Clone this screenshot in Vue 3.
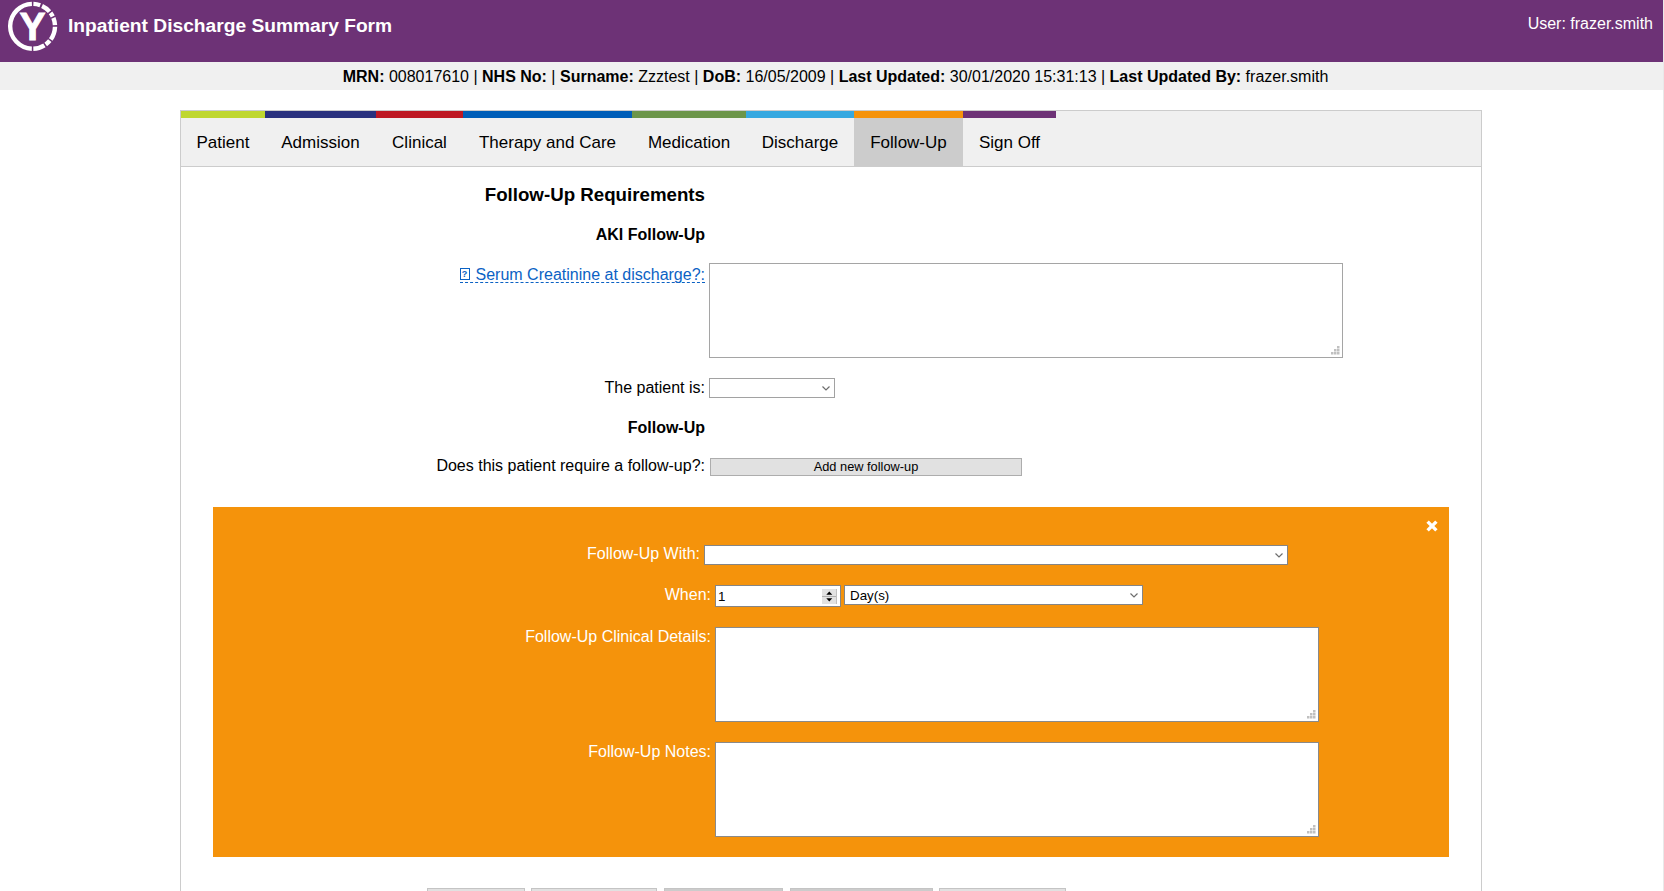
<script setup>
import { ref } from 'vue'

const tabs = [
  { name: 'Patient', key: 'patient' },
  { name: 'Admission', key: 'admission' },
  { name: 'Clinical', key: 'clinical' },
  { name: 'Therapy and Care', key: 'therapy' },
  { name: 'Medication', key: 'medication' },
  { name: 'Discharge', key: 'discharge' },
  { name: 'Follow-Up', key: 'followup' },
  { name: 'Sign Off', key: 'signoff' },
]
const active = ref('followup')

const details = [
  { label: 'MRN:', value: '008017610' },
  { label: 'NHS No:', value: '' },
  { label: 'Surname:', value: 'Zzztest' },
  { label: 'DoB:', value: '16/05/2009' },
  { label: 'Last Updated:', value: '30/01/2020 15:31:13' },
  { label: 'Last Updated By:', value: 'frazer.smith' },
]
</script>

<template>
  <div class="page">
    <header class="top">
      <svg class="logo" width="50" height="50" viewBox="0 0 50 50">
        <circle cx="24.6" cy="25.3" r="22.4" fill="none" stroke="#fff" stroke-width="4.4" pathLength="360"
          stroke-dasharray="18 5 24 4 11 4 19 4 35 4 14 4 30 4 176 4" transform="rotate(-88 24.6 25.3)" />
        <text x="24.4" y="39.4" text-anchor="middle" class="logo-letter">Y</text>
      </svg>
      <h1>Inpatient Discharge Summary Form</h1>
      <span class="user">User: frazer.smith</span>
    </header>
    <div class="info">
      <div><template v-for="(d, i) in details" :key="d.label"><template v-if="i"> | </template><b>{{ d.label }}</b>{{ d.value ? ' ' + d.value : '' }}</template></div>
    </div>

    <main class="panel">
      <nav class="tabs">
        <a v-for="t in tabs" :key="t.key" class="tab" :class="[t.key, { active: t.key === active }]" @click="active = t.key">{{ t.name }}</a>
      </nav>

      <div class="row r-title"><h2 class="label">Follow-Up Requirements</h2></div>
      <div class="row r-sub"><h3 class="label">AKI Follow-Up</h3></div>
      <div class="row r-serum">
        <div class="label"><span class="help"><i class="tofu">?</i>Serum Creatinine at discharge?:</span></div>
        <div class="area wide"><svg class="grip" width="9" height="9" viewBox="0 0 9 9"><path d="M6 0h2.5v2.5h-2.5zM3 3h2.5v2.5h-2.5zM6 3h2.5v2.5h-2.5zM0 6h2.5v2.5h-2.5zM3 6h2.5v2.5h-2.5zM6 6h2.5v2.5h-2.5z" /></svg></div>
      </div>
      <div class="row r-patient">
        <div class="label">The patient is:</div>
        <div class="select s-patient"><svg class="chev" width="8" height="5" viewBox="0 0 8 5"><path d="M.5 .5L4 4L7.5 .5" /></svg></div>
      </div>
      <div class="row r-sub2"><h3 class="label">Follow-Up</h3></div>
      <div class="row r-add">
        <div class="label">Does this patient require a follow-up?:</div>
        <button class="add">Add new follow-up</button>
      </div>

      <section class="follow">
        <svg class="close" width="12" height="12" viewBox="0 0 12 12"><path d="M1.6 1.6L10.4 10.4M10.4 1.6L1.6 10.4" /></svg>
        <div class="row f-with">
          <div class="label">Follow-Up With:</div>
          <div class="select s-with"><svg class="chev" width="8" height="5" viewBox="0 0 8 5"><path d="M.5 .5L4 4L7.5 .5" /></svg></div>
        </div>
        <div class="row f-when">
          <div class="label">When:</div>
          <div class="number">1<svg class="spin" width="15" height="15" viewBox="0 0 15 15"><rect width="15" height="15" fill="#e2e2e2" /><path d="M0 7.5H15" stroke="#b0b0b0" /><path d="M14.5 0V15" stroke="#c0c0c0" /><path d="M4.3 5.8L7.3 2.4L10.3 5.8zM4.3 9.2L7.3 12.6L10.3 9.2z" fill="#000" /></svg></div>
          <div class="select s-day">Day(s)<svg class="chev" width="8" height="5" viewBox="0 0 8 5"><path d="M.5 .5L4 4L7.5 .5" /></svg></div>
        </div>
        <div v-for="name in ['Follow-Up Clinical Details:', 'Follow-Up Notes:']" :key="name" class="row f-area">
          <div class="label">{{ name }}</div>
          <div class="area"><svg class="grip" width="9" height="9" viewBox="0 0 9 9"><path d="M6 0h2.5v2.5h-2.5zM3 3h2.5v2.5h-2.5zM6 3h2.5v2.5h-2.5zM0 6h2.5v2.5h-2.5zM3 6h2.5v2.5h-2.5zM6 6h2.5v2.5h-2.5z" /></svg></div>
        </div>
      </section>

      <div class="actions">
        <button class="a1"></button><button class="a2"></button><button class="a3 dark"></button><button class="a4 dark"></button><button class="a5"></button>
      </div>
    </main>
  </div>
</template>

<style>
body { margin: 0; background: #fff; overflow: hidden; }
</style>

<style scoped>
.page { box-sizing: border-box; width: 1664px; height: 891px; overflow: hidden; border-right: 1px solid #e9e9e9; background: #fff; font: 16px/20px "Liberation Sans", Arial, sans-serif; color: #000; }
.page * { box-sizing: border-box; }
.top { display: flex; height: 62px; padding: 0 10px 0 8px; background: #6d3276; color: #fff; }
.logo { margin-top: 1px; flex: none; }
.logo-letter { font: bold 39px "Liberation Sans", Arial, sans-serif; fill: #fff; stroke: #fff; stroke-width: .9px; }
h1 { margin: 15px 0 0 10px; font-size: 19.2px; line-height: 22px; white-space: nowrap; }
.user { margin: 14px 0 0 auto; }
.info { height: 28px; padding-top: 5px; background: #f0f0f0; text-align: center; padding-left: 8px; white-space: nowrap; }
.panel { width: 1302px; height: 800px; margin: 20px 0 0 180px; border: 1px solid #ccc; }
.tabs { display: flex; height: 56px; background: #f0f0f0; border-bottom: 1px solid #ccc; }
.tab { height: 55px; border-top: 7px solid; padding-top: 15px; text-align: center; font-size: 17px; line-height: 20px; white-space: nowrap; color: #000; }
.tab.active { background: #ccc; height: 56px; }
.patient { width: 84px; border-color: #bfd730; }
.admission { width: 111px; border-color: #2a317e; }
.clinical { width: 87px; border-color: #be1823; }
.therapy { width: 169px; border-color: #005eb8; }
.medication { width: 114px; border-color: #6c954a; }
.discharge { width: 108px; border-color: #36a8e0; }
.followup { width: 109px; border-color: #f5930b; }
.signoff { width: 93px; border-color: #6d3276; }

.row { display: flex; align-items: flex-start; }
.label { width: 524px; margin: 0; flex: none; text-align: right; white-space: nowrap; font-size: 16px; line-height: 20px; }
.r-title { height: 57px; padding-top: 18px; }
.r-title .label { font-size: 18.72px; }
.r-sub { height: 39px; }
h3.label { font-size: 16px; padding-top: 1px; }
.r-serum { height: 115px; }
.r-serum .label { padding-top: 2px; }
.help { display: inline-block; color: #0b62c4; height: 18px; border-bottom: 1px dashed #0b62c4; }
.tofu { display: inline-block; width: 10px; height: 12px; margin-right: 6px; border: 1px solid #0b62c4; font: bold 9px/10px "Liberation Sans", Arial, sans-serif; text-align: center; vertical-align: top; margin-top: 3px; }
.area { position: relative; width: 604px; height: 95px; margin-left: 4px; border: 1px solid #8a8a8a; background: #fff; }
.area.wide { width: 634px; border-color: #a5a5a5; }
.grip { position: absolute; right: 2px; bottom: 2px; fill: #c0c0c0; }
.select { position: relative; height: 20px; border: 1px solid #858585; background: #fff; color: #000; font-size: 13.33px; line-height: 19px; padding-left: 4px; }
.chev { position: absolute; right: 4px; top: 7px; fill: none; stroke: #6e6e6e; stroke-width: 1.2; }
.r-patient { height: 39px; }
.s-patient { width: 126px; margin-left: 4px; border-color: #a2a2a2; }
.r-sub2 { height: 39px; }
.add { width: 312px; height: 18px; margin: 2px 0 0 5px; padding: 0; border: 1px solid #adadad; background: #e1e1e1; color: #000; font: 12.8px/16px "Liberation Sans", Arial, sans-serif; }
.r-add { height: 51px; }

.follow { position: relative; width: 1236px; height: 350px; margin-left: 32px; padding-top: 38px; background: #f5930b; color: #fff; }
.close { position: absolute; left: 1213px; top: 13px; stroke: #fff; stroke-width: 3.4; fill: none; }
.follow .label { width: 498px; }
.f-with { height: 40px; }
.f-with .label { margin-top: -1px; }
.follow .f-with .label { width: 487px; }
.s-with { width: 584px; margin-left: 4px; }
.f-when { height: 42px; }
.number { position: relative; width: 126px; height: 22px; margin-left: 4px; border: 1px solid #858585; background: #fff; color: #000; padding-left: 2px; font-size: 13.33px; line-height: 21px; }
.spin { position: absolute; right: 3px; top: 3px; }
.s-day { width: 299px; margin-left: 3px; padding-left: 5px; }
.f-area { height: 115px; }

.actions { display: flex; margin: 31px 0 0 246px; }
.actions button { height: 20px; padding: 0; border: 1px solid #c4c4c4; background: #e1e1e1; }
.actions .dark { background: #ccc; }
.a1 { width: 98px; }
.a2 { width: 126px; margin-left: 6px; }
.a3 { width: 119px; margin-left: 7px; }
.a4 { width: 143px; margin-left: 7px; }
.a5 { width: 127px; margin-left: 6px; }
</style>
